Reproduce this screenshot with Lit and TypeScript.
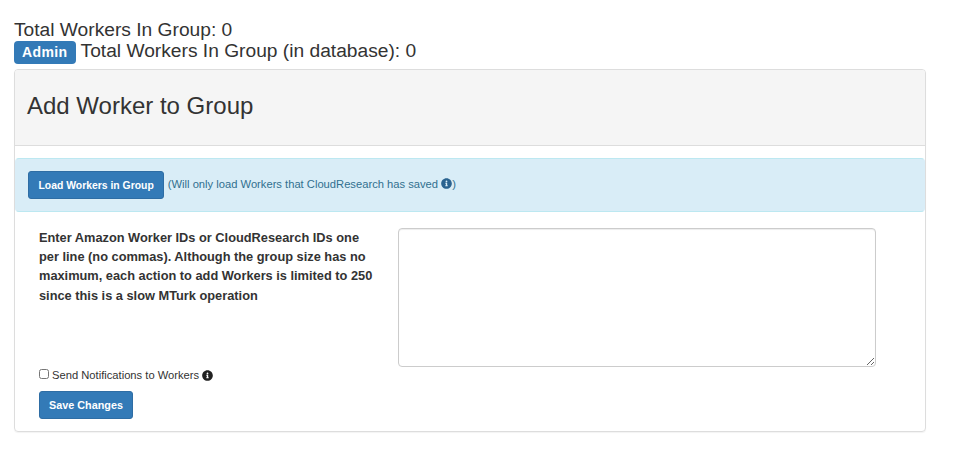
import { LitElement, html, css } from 'lit';
import { customElement } from 'lit/decorators.js';

const infoIcon = html`<svg class="info" viewBox="0 0 512 512" aria-hidden="true">
  <path fill="currentColor" d="M256 8C119 8 8 119 8 256s111 248 248 248 248-111 248-248S393 8 256 8zm0 110c23 0 42 19 42 42s-19 42-42 42-42-19-42-42 19-42 42-42zm56 254c0 7-5 12-12 12h-88c-7 0-12-5-12-12v-24c0-7 5-12 12-12h12v-64h-12c-7 0-12-5-12-12v-24c0-7 5-12 12-12h64c7 0 12 5 12 12v100h12c7 0 12 5 12 12v24z"/>
</svg>`;

@customElement('app-root')
export class AppRoot extends LitElement {
  static styles = css`
    :host {
      display: block;
      box-sizing: border-box;
      height: 464px;
      padding: 19px 27px 0 14px;
      background: #fff;
      font-family: 'Liberation Sans', Arial, sans-serif;
      color: #333;
    }

    * {
      box-sizing: border-box;
    }

    .totals {
      font-size: 19.2px;
      line-height: 21px;
      height: 50px;
    }

    .db-total {
      display: flex;
      align-items: flex-start;
      gap: 5px;
      height: 21px;
    }

    .label-admin {
      height: 23px;
      margin-top: 1px;
      padding: 0 8px;
      border-radius: 4px;
      background: #337ab7;
      color: #fff;
      font-size: 14px;
      line-height: 23px;
      font-weight: bold;
      letter-spacing: 0.4px;
    }

    .panel {
      height: 363px;
      border: 1px solid #ddd;
      border-radius: 4px;
      box-shadow: 0 1px 1px rgba(0, 0, 0, 0.05);
    }

    .panel-heading {
      height: 76px;
      padding: 0 12px 4px;
      display: flex;
      align-items: center;
      background: #f5f5f5;
      border-bottom: 1px solid #ddd;
      border-radius: 3px 3px 0 0;
    }

    h3 {
      margin: 0;
      font-size: 24px;
      font-weight: 500;
      color: #333;
    }

    .alert {
      display: flex;
      align-items: center;
      gap: 3.5px;
      height: 54px;
      margin-top: 12px;
      padding: 0 12px;
      background: #d9edf7;
      border: 1px solid #bce8f1;
      border-left-color: #d9edf7;
      border-right-color: #d9edf7;
      border-radius: 4px;
      color: #31708f;
      font-size: 11.2px;
    }

    .alert-note {
      padding-bottom: 2px;
    }

    .alert .info {
      width: 11px;
      height: 11px;
      margin: 0;
      vertical-align: -1px;
      color: #2a6390;
    }

    .btn {
      height: 28px;
      padding: 0 9.5px;
      border: 1px solid #2e6da4;
      border-radius: 3px;
      background: #337ab7;
      color: #fff;
      font-family: inherit;
      font-size: 10.4px;
      font-weight: bold;
      white-space: nowrap;
    }

    .form {
      padding: 16px 24px 0;
    }

    .row {
      display: grid;
      grid-template-columns: 335px 478px;
      column-gap: 24px;
    }

    .hint {
      margin: 0;
      font-size: 12.8px;
      line-height: 19.2px;
      font-weight: bold;
    }

    textarea {
      display: block;
      width: 478px;
      height: 139px;
      border: 1px solid #ccc;
      border-radius: 4px;
      background: #fff;
      box-shadow: inset 0 1px 1px rgba(0, 0, 0, 0.075);
    }

    .notify {
      display: flex;
      align-items: center;
      height: 16px;
      font-size: 11.2px;
    }

    .notify input {
      width: 10px;
      height: 10px;
      margin: 0 3px 2px 0;
    }

    .notify .info {
      width: 11px;
      height: 11px;
      margin-left: 3px;
      color: #222;
    }

    .save {
      display: block;
      margin-top: 8px;
      width: 94px;
      padding: 0;
      font-size: 10.8px;
    }
  `;

  render() {
    return html`
      <div class="totals">
        <div>Total Workers In Group: 0</div>
        <div class="db-total">
          <span class="label-admin">Admin</span>
          <span>Total Workers In Group (in database): 0</span>
        </div>
      </div>
      <section class="panel">
        <div class="panel-heading"><h3>Add Worker to Group</h3></div>
        <div class="alert">
          <button class="btn">Load Workers in Group</button>
          <span class="alert-note">(Will only load Workers that CloudResearch has saved ${infoIcon})</span>
        </div>
        <div class="form">
          <div class="row">
            <p class="hint">
              Enter Amazon Worker IDs or CloudResearch IDs one per line (no commas). Although the
              group size has no maximum, each action to add Workers is limited to 250 since this
              is a slow MTurk operation
            </p>
            <textarea></textarea>
          </div>
          <label class="notify">
            <input type="checkbox" />
            Send Notifications to Workers ${infoIcon}
          </label>
          <button class="btn save">Save Changes</button>
        </div>
      </section>
    `;
  }
}
